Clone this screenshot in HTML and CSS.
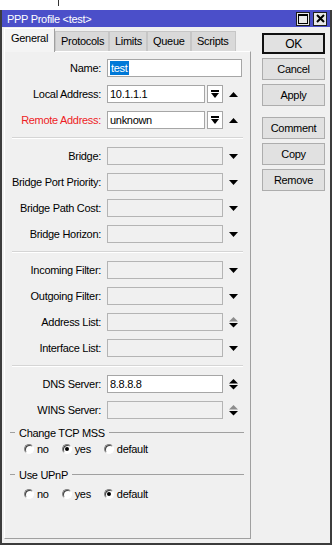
FILE: index.html
```html
<!DOCTYPE html>
<html lang="en">

<head>
  <meta charset="UTF-8">
  <title>PPP Profile &lt;test&gt;</title>
  <link rel="stylesheet" href="styles.css">
</head>

<body>
  <div class="desk"><div class="desk-mark"></div></div>
  <div class="window">
    <div class="titlebar">
      <span class="title">PPP Profile &lt;test&gt;</span>
      <span class="tb-btn">
        <svg width="10" height="10" viewBox="0 0 10 10"><rect x="0.5" y="0.5" width="9" height="9" fill="none" stroke="#000" /><rect x="0" y="0" width="10" height="2" fill="#000" /></svg>
      </span>
      <span class="tb-btn">
        <svg width="9" height="9" viewBox="0 0 9 9"><path d="M1 1 L8 8 M8 1 L1 8" stroke="#000" stroke-width="2" /></svg>
      </span>
    </div>

    <div class="content">
      <div class="left">
        <div class="tabs">
          <div class="tab active" style="width:51px">General</div>
          <div class="tab" style="width:54px">Protocols</div>
          <div class="tab" style="width:38px">Limits</div>
          <div class="tab" style="width:44px">Queue</div>
          <div class="tab" style="width:45px">Scripts</div>
        </div>

        <div class="panel">
          <div class="group">
            <div class="row">
              <span class="lbl">Name:</span>
              <div class="field wide"><span class="sel">test</span></div>
            </div>
            <div class="row">
              <span class="lbl">Local Address:</span>
              <div class="field short">10.1.1.1</div>
              <div class="ddb"><svg width="8" height="9" viewBox="0 0 8 9"><rect x="0" y="0" width="8" height="2" /><polygon points="0,3 8,3 4,8" /></svg></div>
              <svg class="arr" width="9" height="5" viewBox="0 0 9 5"><polygon points="0,5 9,5 4.5,0" /></svg>
            </div>
            <div class="row">
              <span class="lbl red">Remote Address:</span>
              <div class="field short">unknown</div>
              <div class="ddb"><svg width="8" height="9" viewBox="0 0 8 9"><rect x="0" y="0" width="8" height="2" /><polygon points="0,3 8,3 4,8" /></svg></div>
              <svg class="arr" width="9" height="5" viewBox="0 0 9 5"><polygon points="0,5 9,5 4.5,0" /></svg>
            </div>
          </div>

          <div class="sep"></div>

          <div class="group">
            <div class="row">
              <span class="lbl">Bridge:</span>
              <div class="field off"></div>
              <svg class="arr" width="9" height="5" viewBox="0 0 9 5"><polygon points="0,0 9,0 4.5,5" /></svg>
            </div>
            <div class="row">
              <span class="lbl">Bridge Port Priority:</span>
              <div class="field off"></div>
              <svg class="arr" width="9" height="5" viewBox="0 0 9 5"><polygon points="0,0 9,0 4.5,5" /></svg>
            </div>
            <div class="row">
              <span class="lbl">Bridge Path Cost:</span>
              <div class="field off"></div>
              <svg class="arr" width="9" height="5" viewBox="0 0 9 5"><polygon points="0,0 9,0 4.5,5" /></svg>
            </div>
            <div class="row">
              <span class="lbl">Bridge Horizon:</span>
              <div class="field off"></div>
              <svg class="arr" width="9" height="5" viewBox="0 0 9 5"><polygon points="0,0 9,0 4.5,5" /></svg>
            </div>
          </div>

          <div class="sep"></div>

          <div class="group">
            <div class="row">
              <span class="lbl">Incoming Filter:</span>
              <div class="field off"></div>
              <svg class="arr" width="9" height="5" viewBox="0 0 9 5"><polygon points="0,0 9,0 4.5,5" /></svg>
            </div>
            <div class="row">
              <span class="lbl">Outgoing Filter:</span>
              <div class="field off"></div>
              <svg class="arr" width="9" height="5" viewBox="0 0 9 5"><polygon points="0,0 9,0 4.5,5" /></svg>
            </div>
            <div class="row">
              <span class="lbl">Address List:</span>
              <div class="field off"></div>
              <svg class="arr" width="9" height="11" viewBox="0 0 9 11"><polygon points="0,4.5 9,4.5 4.5,0" fill="#8c8c8c" /><polygon points="0,6 9,6 4.5,10.5" /></svg>
            </div>
            <div class="row">
              <span class="lbl">Interface List:</span>
              <div class="field off"></div>
              <svg class="arr" width="9" height="5" viewBox="0 0 9 5"><polygon points="0,0 9,0 4.5,5" /></svg>
            </div>
          </div>

          <div class="sep"></div>

          <div class="group">
            <div class="row">
              <span class="lbl">DNS Server:</span>
              <div class="field">8.8.8.8</div>
              <svg class="arr" width="9" height="11" viewBox="0 0 9 11"><polygon points="0,4.5 9,4.5 4.5,0" /><polygon points="0,6 9,6 4.5,10.5" /></svg>
            </div>
            <div class="row">
              <span class="lbl">WINS Server:</span>
              <div class="field off"></div>
              <svg class="arr" width="9" height="11" viewBox="0 0 9 11"><polygon points="0,4.5 9,4.5 4.5,0" fill="#8c8c8c" /><polygon points="0,6 9,6 4.5,10.5" /></svg>
            </div>
          </div>

          <div class="legend first">
            <span class="dash"></span><span class="legend-text">Change TCP MSS</span><span class="line"></span>
          </div>
          <div class="radios first">
            <span class="radio"></span><span class="rlbl">no</span>
            <span class="radio checked"></span><span class="rlbl">yes</span>
            <span class="radio"></span><span class="rlbl">default</span>
          </div>

          <div class="legend second">
            <span class="dash"></span><span class="legend-text">Use UPnP</span><span class="line"></span>
          </div>
          <div class="radios second">
            <span class="radio"></span><span class="rlbl">no</span>
            <span class="radio"></span><span class="rlbl">yes</span>
            <span class="radio checked"></span><span class="rlbl">default</span>
          </div>
        </div>
      </div>

      <div class="buttons">
        <div class="btn default">OK</div>
        <div class="btn">Cancel</div>
        <div class="btn">Apply</div>
        <div class="btn spaced">Comment</div>
        <div class="btn">Copy</div>
        <div class="btn">Remove</div>
      </div>
    </div>
  </div>
</body>

</html>
```

FILE: styles.css
```css
* {
  margin: 0;
  padding: 0;
  box-sizing: border-box;
}

body {
  font-family: 'Liberation Sans', Arial, sans-serif;
  font-size: 11px;
  letter-spacing: -0.3px;
  color: #000;
  background: #ffffff;
  width: 334px;
  height: 545px;
  overflow: hidden;
}

.desk {
  height: 10px;
}

.desk-mark {
  margin-left: 58px;
  width: 1px;
  height: 6px;
  background: #333;
}

.window {
  width: 332px;
  height: 535px;
  border: 2px solid #3c3c3c;
  border-top: none;
  background: #f0f0f0;
}

.titlebar {
  height: 17px;
  background: #4b4fc9;
  color: #ffffff;
  display: flex;
  align-items: center;
  padding-left: 5px;
}

.title {
  flex: 1;
}

.tb-btn {
  width: 14px;
  height: 14px;
  margin-left: 3px;
  border: 1px solid #1e1e1e;
  background: #e8e8e8;
  display: flex;
  justify-content: center;
  align-items: center;
}

.tb-btn:last-child {
  margin-right: 3px;
}

.content {
  display: flex;
  padding: 1px 0 0 2px;
}

.left {
  width: 247px;
}

.tabs {
  height: 23px;
  display: flex;
  align-items: flex-end;
}

.tab {
  height: 20px;
  background: #d9d9d9;
  border: 1px solid #c6c6c6;
  border-bottom: none;
  padding: 3px 0 0 5px;
}

.tab.active {
  height: 24px;
  margin-bottom: -1px;
  background: #f4f4f4;
  border-color: #ffffff #a0a0a0 #f0f0f0 #ffffff;
  padding: 3px 0 0 6px;
  position: relative;
  z-index: 1;
}

.panel {
  height: 488px;
  border: 1px solid;
  border-color: #ffffff #a0a0a0 #a0a0a0 #ffffff;
  padding-top: 7px;
}

.group {
  display: flex;
  flex-direction: column;
  gap: 8px;
}

.row {
  display: flex;
  align-items: center;
  height: 18px;
}

.lbl {
  width: 96px;
  margin-right: 6px;
  text-align: right;
  white-space: nowrap;
}

.lbl.red {
  color: #ee1c25;
}

.field {
  width: 116px;
  height: 18px;
  border: 1px solid #a6a6a6;
  background: #ffffff;
  padding-left: 2px;
  line-height: 16px;
  white-space: nowrap;
}

.field.wide {
  width: 135px;
}

.field.short {
  width: 98px;
}

.field.off {
  background: #f0f0f0;
  border-color: #b4b4b4;
}

.sel {
  display: inline-block;
  height: 14px;
  line-height: 14px;
  margin-top: 1px;
  padding: 0 1px;
  background: #0078d7;
  color: #ffffff;
}

.ddb {
  width: 16px;
  height: 18px;
  margin-left: 2px;
  border: 1px solid #a6a6a6;
  background: #ffffff;
  display: flex;
  justify-content: center;
  align-items: center;
}

.arr {
  margin-left: 6px;
  fill: #000;
}

.sep {
  height: 2px;
  margin: 8px 7px;
  border-top: 1px solid #d5d5d5;
  border-bottom: 1px solid #ffffff;
}

.legend {
  display: flex;
  align-items: center;
  height: 13px;
  margin: 0 6px 0 5px;
}

.legend.first {
  margin-top: 7px;
}

.legend.second {
  margin-top: 13px;
}

.dash {
  width: 5px;
  height: 1px;
  background: #a0a0a0;
}

.legend-text {
  margin: 0 4px;
}

.line {
  flex: 1;
  height: 1px;
  background: #a0a0a0;
}

.radios {
  display: flex;
  align-items: center;
  height: 13px;
  padding-left: 19px;
}

.radios.first {
  margin-top: 3px;
}

.radios.second {
  margin-top: 6px;
}

.radio {
  width: 10px;
  height: 10px;
  border-radius: 50%;
  background: #ffffff;
  border: 1px solid;
  border-color: #808080 #ffffff #ffffff #808080;
  box-shadow: inset 1px 1px 0 #404040;
  margin-right: 3px;
  display: flex;
  justify-content: center;
  align-items: center;
}

.radio.checked::after {
  content: '';
  width: 4px;
  height: 4px;
  border-radius: 50%;
  background: #000;
}

.rlbl {
  margin-right: 13px;
}

.buttons {
  margin-left: 11px;
  padding-top: 5px;
  display: flex;
  flex-direction: column;
  gap: 4px;
}

.btn {
  width: 63px;
  height: 22px;
  border: 1px solid #adadad;
  background: #e1e1e1;
  display: flex;
  justify-content: center;
  align-items: center;
}

.btn.default {
  height: 21px;
  border: 2px solid #111;
  font-size: 12px;
}

.btn.spaced {
  margin-top: 7px;
}
```
